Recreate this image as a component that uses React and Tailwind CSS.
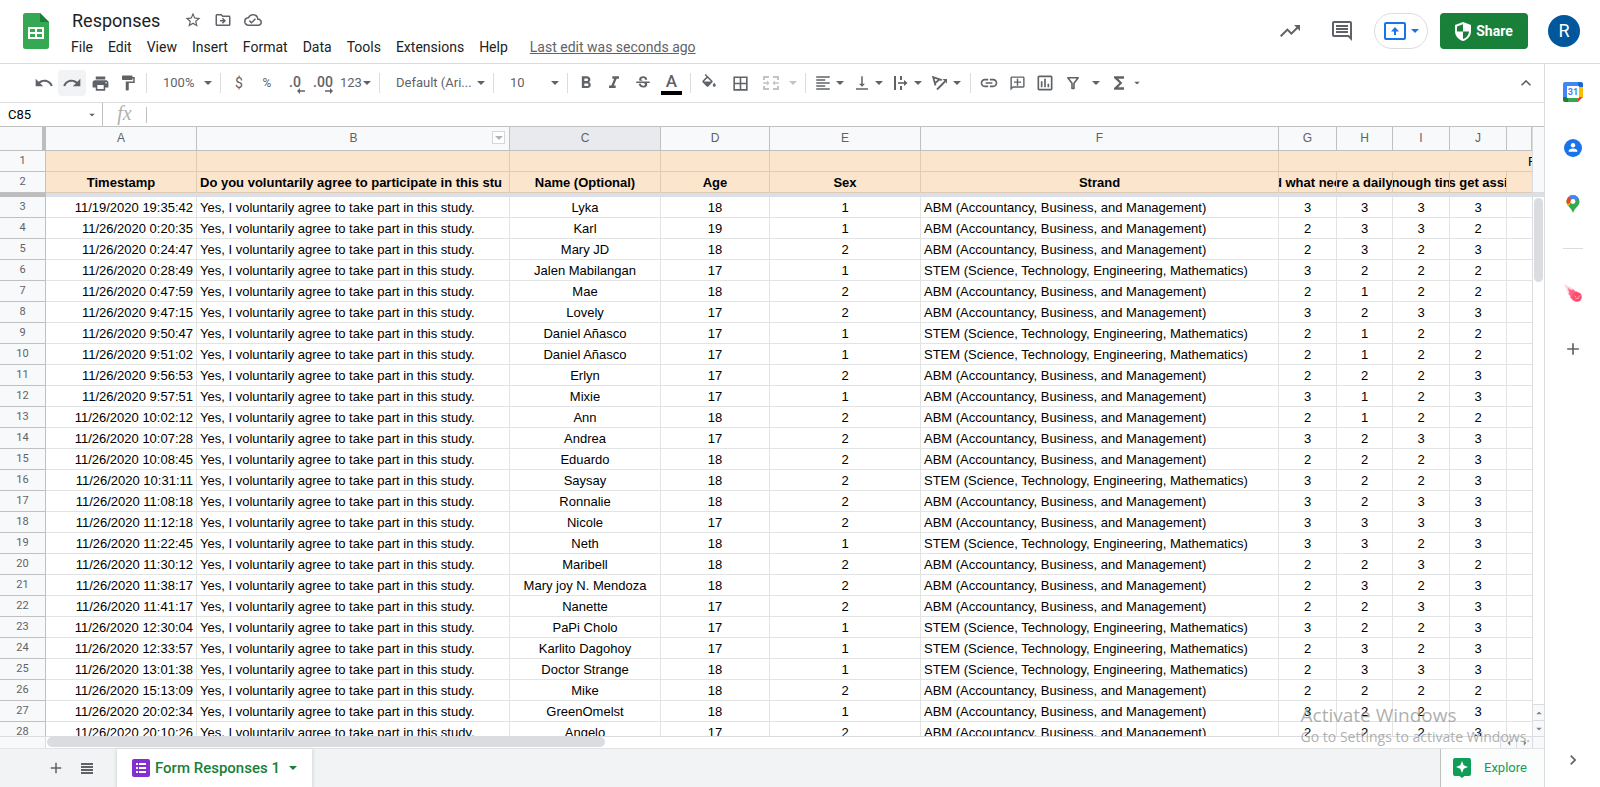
import {
  MdAdd,
  MdChevronRight,
  MdExpandLess,
  MdFormatAlignLeft,
  MdFormatBold,
  MdFormatItalic,
  MdFormatPaint,
  MdFunctions,
  MdLink,
  MdOutlineAddComment,
  MdOutlineAssessment,
  MdOutlineBorderAll,
  MdOutlineCloudDone,
  MdOutlineDriveFileMove,
  MdOutlineInsertComment,
  MdPrint,
  MdRedo,
  MdStarBorder,
  MdStrikethroughS,
  MdTrendingUp,
  MdUndo,
  MdVerticalAlignBottom,
} from "react-icons/md";

const MENUS = ["File", "Edit", "View", "Insert", "Format", "Data", "Tools", "Extensions", "Help"];

const CONSENT = "Yes, I voluntarily agree to take part in this study.";
const ABM = "ABM (Accountancy, Business, and Management)";
const STEM = "STEM (Science, Technology, Engineering, Mathematics)";

// timestamp, name, age, sex, strand, answers G-J
const ROWS = [
  ["11/19/2020 19:35:42", "Lyka", 18, 1, ABM, [3, 3, 3, 3]],
  ["11/26/2020 0:20:35", "Karl", 19, 1, ABM, [2, 3, 3, 2]],
  ["11/26/2020 0:24:47", "Mary JD", 18, 2, ABM, [2, 3, 2, 3]],
  ["11/26/2020 0:28:49", "Jalen Mabilangan", 17, 1, STEM, [3, 2, 2, 2]],
  ["11/26/2020 0:47:59", "Mae", 18, 2, ABM, [2, 1, 2, 2]],
  ["11/26/2020 9:47:15", "Lovely", 17, 2, ABM, [3, 2, 3, 3]],
  ["11/26/2020 9:50:47", "Daniel Añasco", 17, 1, STEM, [2, 1, 2, 2]],
  ["11/26/2020 9:51:02", "Daniel Añasco", 17, 1, STEM, [2, 1, 2, 2]],
  ["11/26/2020 9:56:53", "Erlyn", 17, 2, ABM, [2, 2, 2, 3]],
  ["11/26/2020 9:57:51", "Mixie", 17, 1, ABM, [3, 1, 2, 3]],
  ["11/26/2020 10:02:12", "Ann", 18, 2, ABM, [2, 1, 2, 2]],
  ["11/26/2020 10:07:28", "Andrea", 17, 2, ABM, [3, 2, 3, 3]],
  ["11/26/2020 10:08:45", "Eduardo", 18, 2, ABM, [2, 2, 2, 3]],
  ["11/26/2020 10:31:11", "Saysay", 18, 2, STEM, [3, 2, 2, 3]],
  ["11/26/2020 11:08:18", "Ronnalie", 18, 2, ABM, [3, 2, 3, 3]],
  ["11/26/2020 11:12:18", "Nicole", 17, 2, ABM, [3, 3, 3, 3]],
  ["11/26/2020 11:22:45", "Neth", 18, 1, STEM, [3, 3, 2, 3]],
  ["11/26/2020 11:30:12", "Maribell", 18, 2, ABM, [2, 2, 3, 2]],
  ["11/26/2020 11:38:17", "Mary joy N. Mendoza", 18, 2, ABM, [2, 3, 2, 3]],
  ["11/26/2020 11:41:17", "Nanette", 17, 2, ABM, [2, 2, 3, 3]],
  ["11/26/2020 12:30:04", "PaPi Cholo", 17, 1, STEM, [3, 2, 2, 3]],
  ["11/26/2020 12:33:57", "Karlito Dagohoy", 17, 1, STEM, [2, 3, 2, 3]],
  ["11/26/2020 13:01:38", "Doctor Strange", 18, 1, STEM, [2, 3, 3, 3]],
  ["11/26/2020 15:13:09", "Mike", 18, 2, ABM, [2, 2, 2, 2]],
  ["11/26/2020 20:02:34", "GreenOmelst", 18, 1, ABM, [3, 2, 2, 3]],
  ["11/26/2020 20:10:26", "Angelo", 17, 2, ABM, [2, 2, 2, 3]],
];

const QUESTIONS = ["d what nee", "re a daily", "nough tin", "s get assi"];

function Caret({ className = "" }) {
  return (
    <svg viewBox="0 0 8 4" className={`h-1 w-2 shrink-0 ${className}`} fill="currentColor">
      <path d="M0 0h8L4 4z" />
    </svg>
  );
}

function SheetsLogo() {
  return (
    <svg viewBox="0 0 26 36" className="h-9 w-[26px] shrink-0">
      <path d="M17 0H2.5A2.5 2.5 0 0 0 0 2.5v31A2.5 2.5 0 0 0 2.5 36h21a2.5 2.5 0 0 0 2.5-2.5V9z" fill="#34a853" />
      <path d="M17 0l9 9h-9z" fill="#188038" />
      <path d="M5 14h16v12H5zM7 16v3h5v-3zm7 0v3h5v-3zm-7 5v3h5v-3zm7 0v3h5v-3z" fill="#fff" fillRule="evenodd" />
    </svg>
  );
}

function DecimalIcon({ more }) {
  return (
    <span className="flex flex-col items-center pt-1 text-sm leading-3 font-medium">
      {more ? ".00" : ".0"}
      <svg
        viewBox="0 0 8 6"
        className={more ? "ml-3 h-[6px] w-2" : "ml-3 h-[6px] w-2 rotate-180"}
        fill="currentColor"
      >
        <path d="M0 2.2h5V0l3 3-3 3V3.8H0z" />
      </svg>
    </span>
  );
}

function FillIcon() {
  return (
    <svg viewBox="0 0 24 24" className="size-[18px]" fill="currentColor">
      <path d="M16.560 8.940 7.620 0 6.210 1.410l2.380 2.380-5.150 5.150a1.490 1.490 0 0 0 0 2.120l5.500 5.500c.29.29.68.44 1.060.44s.77-.15 1.060-.44l5.500-5.500c.59-.58.59-1.530 0-2.120zM5.210 10 10 5.210 14.790 10zM19 11.500s-2 2.170-2 3.500c0 1.100.9 2 2 2s2-.9 2-2c0-1.330-2-3.500-2-3.500z" />
    </svg>
  );
}

function FunnelIcon() {
  return (
    <svg viewBox="0 0 14 14" className="size-[14px]" fill="none" stroke="currentColor" strokeWidth="1.6">
      <path d="M1.800 1.800h10.400L8 7.200v5.300H6V7.200z" strokeLinejoin="round" />
    </svg>
  );
}

function MergeIcon() {
  return (
    <svg viewBox="0 0 16 14" className="h-[14px] w-4" fill="none" stroke="currentColor" strokeWidth="2">
      <path d="M1 4V1h5M10 1h5v3M1 10v3h5M10 13h5v-3" />
      <path d="M0 7h5M16 7h-5" strokeWidth="1.5" />
      <path d="M4 4.5 6.6 7 4 9.5zM12 4.5 9.4 7l2.6 2.5z" fill="currentColor" stroke="none" />
    </svg>
  );
}

function OverflowIcon() {
  return (
    <svg viewBox="0 0 16 16" className="size-4" fill="none" stroke="currentColor" strokeWidth="2">
      <path d="M2 1v14M8 1v4M8 11v4" />
      <path d="M5 8h8" strokeWidth="1.6" />
      <path d="M11 5l3.6 3L11 11z" fill="currentColor" stroke="none" />
    </svg>
  );
}

function RotateTextIcon() {
  return (
    <svg viewBox="0 0 18 16" className="h-4 w-[18px]" fill="none" stroke="currentColor" strokeWidth="1.8">
      <path d="M4.500 10.500 2.200 2.200l8.600 3M8.400 4.600l-4.600 3.700" />
      <path d="M6 14.500 14 6.500" />
      <path d="M11.500 4H16v4.500z" fill="currentColor" stroke="none" />
    </svg>
  );
}

function PresentIcon() {
  return (
    <svg viewBox="0 0 22 18" className="h-[18px] w-[22px]" fill="none" stroke="currentColor" strokeWidth="2">
      <rect x="1" y="1" width="20" height="16" rx="1" />
      <path d="M11 13V8" />
      <path d="M7 9.5 11 5l4 4.5z" fill="currentColor" stroke="none" />
    </svg>
  );
}

function ShieldIcon() {
  return (
    <svg viewBox="0 0 16 19" className="h-[19px] w-4">
      <path d="M8 0 0 3v6c0 4.700 3.200 8.800 8 10 4.800-1.200 8-5.300 8-10V3z" fill="#fff" />
      <path d="M8 2.200v7.300H2V4.400zM8 9.500h6c-.3 3.700-2.600 6.500-6 7.400z" fill="#188038" />
    </svg>
  );
}

function CalendarIcon() {
  return (
    <svg viewBox="0 0 20 20" className="size-5">
      <path d="M2 0h13v5H5v10H0V2a2 2 0 0 1 2-2z" fill="#4285f4" />
      <path d="M15 0h3a2 2 0 0 1 2 2v3h-5z" fill="#1967d2" />
      <path d="M15 5h5v10h-5z" fill="#fbbc04" />
      <path d="M5 15h10v5H5z" fill="#34a853" />
      <path d="M0 15h5v5H2a2 2 0 0 1-2-2z" fill="#188038" />
      <path d="M15 15h5l-5 5z" fill="#ea4335" />
      <path d="M4 4h12v12H4z" fill="#fff" />
      <text x="10" y="13" textAnchor="middle" fontSize="9" fontWeight="700" fill="#4285f4">
        31
      </text>
    </svg>
  );
}

function ContactsIcon() {
  return (
    <svg viewBox="0 0 18 18" className="size-[18px]">
      <circle cx="9" cy="9" r="9" fill="#1a73e8" />
      <circle cx="9" cy="6.300" r="2.200" fill="#fff" />
      <path d="M4.500 12.800c0-2.300 2-3.300 4.500-3.300s4.500 1 4.500 3.300z" fill="#fff" />
    </svg>
  );
}

function MapsIcon() {
  return (
    <svg viewBox="0 0 14 18" className="h-[18px] w-[14px]">
      <clipPath id="pin">
        <path d="M7 0a6.500 6.500 0 0 0-6.500 6.500c0 2 .8 3.300 2 4.800C4.500 13.600 6 15 7 18c1-3 2.500-4.400 4.500-6.700 1.200-1.500 2-2.800 2-4.800A6.500 6.500 0 0 0 7 0z" />
      </clipPath>
      <g clipPath="url(#pin)">
        <path d="M0 0h14v18H0z" fill="#34a853" />
        <path d="M0 13.500 12 0H0z" fill="#fbbc04" />
        <path d="M3 0h10v4L9 5 7 7 2.500 2.500z" fill="#4285f4" />
        <path d="M0 1.500h2.500L6 5 2.500 9 0 8z" fill="#ea4335" />
      </g>
      <circle cx="7" cy="6.500" r="2.400" fill="#fff" />
    </svg>
  );
}

function CometIcon() {
  return (
    <svg viewBox="0 0 20 20" className="size-5">
      <path d="M1 1l8 4 5 4-6 6-3-5z" fill="#ffd3dc" />
      <path d="M5 5l4 2.500L9.500 6l3 2.500h1.500l3 3-7 6-3-3.500.5-1-2.500-2.500 1.500.2z" fill="#ff6484" />
      <circle cx="14" cy="14" r="4.800" fill="#ff4a6e" />
      <path d="M11.500 13l1.500 1M17 12.500l-1.500 1.500M12.500 16c1-1 2.500-1 3.500-.5" stroke="#ffd0da" strokeWidth=".8" fill="none" />
    </svg>
  );
}

function ExploreIcon() {
  return (
    <svg viewBox="0 0 18 20" className="h-5 w-[18px]">
      <path d="M2 0h14a2 2 0 0 1 2 2v14a2 2 0 0 1-2 2h-4.500L9 20l-2.500-2H2a2 2 0 0 1-2-2V2a2 2 0 0 1 2-2z" fill="#0f9d58" />
      <path d="M9 3l1.700 4.300L15 9l-4.300 1.700L9 15l-1.700-4.300L3 9l4.300-1.700z" fill="#fff" />
    </svg>
  );
}

function FormIcon() {
  return (
    <svg viewBox="0 0 18 18" className="size-[18px] shrink-0">
      <rect width="18" height="18" rx="2" fill="#8430ce" />
      <path d="M4 4h2v2H4zM7 4h7v2H7zM4 8h2v2H4zM7 8h7v2H7zM4 12h2v2H4zM7 12h7v2H7z" fill="#fff" />
    </svg>
  );
}

function Separator() {
  return <div className="mx-1 h-5 w-px shrink-0 bg-[#dadce0]" />;
}

function ToolButton({ label, className = "w-7", children }) {
  return (
    <button
      type="button"
      aria-label={label}
      className={`flex h-[26px] shrink-0 items-center justify-center rounded-sm ${className}`}
    >
      {children}
    </button>
  );
}

function ToolMenu({ label, children }) {
  return (
    <button type="button" aria-label={label} className="flex h-[26px] w-[39px] shrink-0 items-center gap-1 pl-1">
      <span className="flex w-[18px] justify-center">{children}</span>
      <Caret />
    </button>
  );
}

function ToolSelect({ label, value, className }) {
  return (
    <div className={`relative flex h-[26px] shrink-0 items-center ${className}`}>
      <select aria-label={label} className="h-full w-full appearance-none bg-transparent pl-3 text-[13px] outline-none">
        <option>{value}</option>
      </select>
      <Caret className="pointer-events-none absolute right-1" />
    </div>
  );
}

function Header() {
  return (
    <header className="flex h-16 shrink-0 items-center border-b border-[#dadce0] pr-5 pb-px pl-[23px]">
      <SheetsLogo />
      <div className="ml-[15px] flex flex-col">
        <div className="flex h-8 items-center px-2 text-[#5f6368]">
          <h1 className="pt-0.5 text-lg text-[#202124]">Responses</h1>
          <div className="ml-6 flex gap-3">
            <button type="button" aria-label="Star"><MdStarBorder className="size-[18px]" /></button>
            <button type="button" aria-label="Move"><MdOutlineDriveFileMove className="size-[18px]" /></button>
            <button type="button" aria-label="See document status"><MdOutlineCloudDone className="size-[18px]" /></button>
          </div>
        </div>
        <nav className="flex h-[22px] items-center gap-px text-sm text-[#202124]">
          {MENUS.map((menu) => (
            <button key={menu} type="button" className="px-[7px]">
              {menu}
            </button>
          ))}
          <a href="#history" className="ml-[14px] text-[#5f6368] underline">
            Last edit was seconds ago
          </a>
        </nav>
      </div>
      <div className="ml-auto flex items-center gap-3 text-[#5f6368]">
        <button type="button" aria-label="Activity" className="flex size-10 items-center justify-center">
          <MdTrendingUp className="size-6" />
        </button>
        <button type="button" aria-label="Comments" className="flex size-10 items-center justify-center">
          <MdOutlineInsertComment className="size-6" />
        </button>
        <button
          type="button"
          aria-label="Present"
          className="flex h-9 w-[54px] items-center justify-center gap-[5px] rounded-full border border-[#dadce0] text-[#1a73e8]"
        >
          <PresentIcon />
          <Caret />
        </button>
        <button
          type="button"
          className="flex h-9 w-[88px] items-center justify-center gap-[5px] rounded bg-[#188038] text-sm font-bold text-white"
        >
          <ShieldIcon />
          Share
        </button>
        <button
          type="button"
          aria-label="Account"
          className="ml-2 flex size-8 items-center justify-center rounded-full bg-[#01579b] text-lg text-white"
        >
          R
        </button>
      </div>
    </header>
  );
}

function Toolbar() {
  return (
    <div className="flex h-[39px] shrink-0 items-center border-b border-[#dadce0] pr-[6px] pl-[30px] text-[#5f6368]">
      <ToolButton label="Undo"><MdUndo className="size-5" /></ToolButton>
      <ToolButton label="Redo" className="w-7 bg-[#f1f3f4]"><MdRedo className="size-5" /></ToolButton>
      <ToolButton label="Print"><MdPrint className="size-[19px]" /></ToolButton>
      <ToolButton label="Paint format"><MdFormatPaint className="size-[18px]" /></ToolButton>
      <Separator />
      <ToolSelect label="Zoom" value="100%" className="w-[65px]" />
      <Separator />
      <ToolButton label="Format as currency"><span className="text-sm">$</span></ToolButton>
      <ToolButton label="Format as percent"><span className="text-xs">%</span></ToolButton>
      <ToolButton label="Decrease decimal places"><DecimalIcon /></ToolButton>
      <ToolButton label="Increase decimal places"><DecimalIcon more /></ToolButton>
      <button type="button" className="flex h-[26px] w-[38px] items-center gap-[1px] pl-[3px] text-[13px]">
        123
        <Caret />
      </button>
      <Separator />
      <ToolSelect label="Font" value="Default (Ari..." className="w-[105px]" />
      <Separator />
      <ToolSelect label="Font size" value="10" className="w-[65px]" />
      <Separator />
      <ToolButton label="Bold"><MdFormatBold className="size-5" /></ToolButton>
      <ToolButton label="Italic"><MdFormatItalic className="size-5" /></ToolButton>
      <ToolButton label="Strikethrough" className="w-[29px]"><MdStrikethroughS className="size-[18px]" /></ToolButton>
      <ToolButton label="Text color" className="w-[29px]">
        <span className="flex w-[21px] flex-col items-center text-[17px] leading-5 font-medium">
          A
          <span className="h-1 w-full bg-black" />
        </span>
      </ToolButton>
      <Separator />
      <ToolButton label="Fill color"><FillIcon /></ToolButton>
      <ToolButton label="Borders" className="w-[34px]"><MdOutlineBorderAll className="size-[19px]" /></ToolButton>
      <ToolButton label="Merge cells" className="w-7 text-[#c1c3c6]"><MergeIcon /></ToolButton>
      <ToolButton label="Merge type" className="w-4 text-[#c1c3c6]"><Caret /></ToolButton>
      <Separator />
      <ToolMenu label="Horizontal align"><MdFormatAlignLeft className="size-[18px]" /></ToolMenu>
      <ToolMenu label="Vertical align"><MdVerticalAlignBottom className="size-[18px]" /></ToolMenu>
      <ToolMenu label="Text wrapping"><OverflowIcon /></ToolMenu>
      <ToolMenu label="Text rotation"><RotateTextIcon /></ToolMenu>
      <Separator />
      <ToolButton label="Insert link"><MdLink className="size-5" /></ToolButton>
      <ToolButton label="Insert comment"><MdOutlineAddComment className="size-[17px] -scale-x-100" /></ToolButton>
      <ToolButton label="Insert chart"><MdOutlineAssessment className="size-5" /></ToolButton>
      <ToolButton label="Create a filter"><FunnelIcon /></ToolButton>
      <ToolButton label="Filter views" className="w-[18px]"><Caret /></ToolButton>
      <ToolButton label="Functions" className="w-[27px]"><MdFunctions className="size-5" /></ToolButton>
      <ToolButton label="More functions" className="w-[10px]"><Caret className="scale-75" /></ToolButton>
      <ToolButton label="Hide the menus" className="ml-auto w-6"><MdExpandLess className="size-5" /></ToolButton>
    </div>
  );
}

function FormulaBar() {
  return (
    <div className="flex h-[24px] shrink-0 items-center border-b border-[#c0c0c0]">
      <div className="flex h-full w-[103px] items-center border-r border-[#c0c0c0] pr-[6px] pl-2 text-[#5f6368]">
        <input aria-label="Name box" defaultValue="C85" className="w-full min-w-0 text-[13px] text-black outline-none" />
        <Caret className="scale-75" />
      </div>
      <label
        htmlFor="formula"
        className="w-[43px] pb-1 text-center font-['Liberation_Serif',serif] text-xl leading-none text-[#b0b0b0] italic"
      >
        fx
      </label>
      <input id="formula" className="h-4 min-w-0 flex-1 border-l border-[#c0c0c0] px-2 text-[13px] outline-none" />
    </div>
  );
}

function HeadCell({ children, active }) {
  return (
    <th
      scope="col"
      className={`h-6 overflow-hidden border-r border-b border-[#c0c0c0] pb-0.5 text-xs font-normal text-[#5f6368] ${
        active ? "bg-[#e8eaed]" : "bg-[#f8f9fa]"
      }`}
    >
      {children}
    </th>
  );
}

function RowNumber({ n }) {
  return (
    <th
      scope="row"
      className="border-r border-b border-[#c0c0c0] bg-[#f8f9fa] pb-px font-['Roboto',sans-serif] text-[11px] leading-[19px] font-normal text-[#5f6368]"
    >
      {n}
    </th>
  );
}

function Cell({ children, align = "text-center" }) {
  return (
    <td className={`h-[21px] overflow-hidden border-r border-b border-[#e2e3e3] px-[3px] pt-0.5 leading-[18px] whitespace-nowrap ${align}`}>
      {children}
    </td>
  );
}

function FrozenCell({ children, start }) {
  return (
    <td className="h-[21px] overflow-hidden border-r border-b border-[#e0cbb5] bg-[#fce5cd] pt-0.5 leading-[18px] font-bold whitespace-nowrap">
      <div className={`flex overflow-hidden ${start ? "pl-[3px]" : "justify-center"}`}>
        <span className="shrink-0">{children}</span>
      </div>
    </td>
  );
}

function Grid() {
  return (
    <table className="w-full table-fixed border-separate border-spacing-0 font-['Liberation_Sans',Arial,sans-serif] text-[13px] text-black">
      <colgroup>
        <col className="w-[46px]" />
        <col className="w-[151px]" />
        <col className="w-[313px]" />
        <col className="w-[151px]" />
        <col className="w-[109px]" />
        <col className="w-[151px]" />
        <col className="w-[358px]" />
        <col className="w-[58px]" />
        <col className="w-[56px]" />
        <col className="w-[57px]" />
        <col className="w-[57px]" />
        <col />
      </colgroup>
      <thead>
        <tr>
          <td className="h-6 border-r-4 border-b border-r-[#bdbdbd] border-b-[#c0c0c0] bg-[#f8f9fa]" />
          <HeadCell>A</HeadCell>
          <HeadCell>
            <div className="flex items-center pr-1 pl-[18px]">
              <span className="flex-1">B</span>
              <button
                type="button"
                aria-label="Column B menu"
                className="flex size-[13px] items-center justify-center border border-[#d5d7da] bg-white text-[#b0b3b8]"
              >
                <Caret />
              </button>
            </div>
          </HeadCell>
          <HeadCell active>C</HeadCell>
          {["D", "E", "F", "G", "H", "I", "J", ""].map((col) => (
            <HeadCell key={col}>{col}</HeadCell>
          ))}
        </tr>
        <tr>
          <RowNumber n={1} />
          {["a", "b", "c", "d", "e", "f"].map((col) => (
            <FrozenCell key={col}>&nbsp;</FrozenCell>
          ))}
          <td colSpan={5} className="h-[21px] overflow-hidden border-b border-[#e0cbb5] bg-[#fce5cd] pt-0.5 leading-[18px]">
            <div className="ml-auto w-1 overflow-hidden">R</div>
          </td>
        </tr>
        <tr>
          <RowNumber n={2} />
          <FrozenCell>Timestamp</FrozenCell>
          <FrozenCell start>Do you voluntarily agree to participate in this stu</FrozenCell>
          <FrozenCell>Name (Optional)</FrozenCell>
          <FrozenCell>Age</FrozenCell>
          <FrozenCell>Sex</FrozenCell>
          <FrozenCell>Strand</FrozenCell>
          {QUESTIONS.map((question) => (
            <FrozenCell key={question}>{question}</FrozenCell>
          ))}
          <td className="border-b border-[#e0cbb5] bg-[#fce5cd]" />
        </tr>
        <tr>
          <td className="h-1 bg-[#bdbdbd]" />
          <td colSpan={11} className="h-1 bg-[#dadfe8]" />
        </tr>
      </thead>
      <tbody>
        {ROWS.map(([time, name, age, sex, strand, answers], i) => (
          <tr key={time}>
            <RowNumber n={i + 3} />
            <Cell align="text-right">{time}</Cell>
            <Cell align="text-left">{CONSENT}</Cell>
            <Cell>{name}</Cell>
            <Cell>{age}</Cell>
            <Cell>{sex}</Cell>
            <Cell align="text-left">{strand}</Cell>
            {answers.map((answer, k) => (
              <Cell key={k}>{answer}</Cell>
            ))}
            <td className="border-b border-[#e2e3e3]" />
          </tr>
        ))}
      </tbody>
    </table>
  );
}

function VerticalScroll() {
  return (
    <div className="flex w-3 shrink-0 flex-col border-l border-[#dadce0] text-[#80868b]">
      <div className="h-[66px] shrink-0 border-b border-[#dadce0] bg-[#f8f9fa]" />
      <div className="h-1 shrink-0 bg-[#dadfe8]" />
      <div className="mx-px mt-px h-[84px] shrink-0 rounded-full bg-[#dadce0]" />
      <button type="button" aria-label="Scroll up" className="mt-auto flex h-4 items-center justify-center border-t border-[#dadce0] bg-[#f8f9fa]">
        <Caret className="rotate-180 scale-75" />
      </button>
      <button type="button" aria-label="Scroll down" className="flex h-4 items-center justify-center border-t border-[#dadce0] bg-[#f8f9fa]">
        <Caret className="scale-75" />
      </button>
    </div>
  );
}

function HorizontalScroll() {
  return (
    <div className="flex h-3 shrink-0 border-t border-[#dadce0] text-[#80868b]">
      <div className="w-[46px] border-r border-[#dadce0] bg-[#f8f9fa]" />
      <div className="ml-px h-[10px] w-[558px] rounded-full bg-[#dadce0]" />
      <button type="button" aria-label="Scroll left" className="ml-auto flex w-4 items-center justify-center border-l border-[#dadce0] bg-[#f8f9fa]">
        <Caret className="rotate-90 scale-75" />
      </button>
      <button type="button" aria-label="Scroll right" className="flex w-4 items-center justify-center border-l border-[#dadce0] bg-[#f8f9fa]">
        <Caret className="-rotate-90 scale-75" />
      </button>
      <div className="w-3 border-l border-[#dadce0] bg-[#f8f9fa]" />
    </div>
  );
}

function SheetTabs() {
  return (
    <footer className="flex h-[39px] shrink-0 border-t border-[#e2e3e3] bg-[#f1f3f4] text-[#5f6368]">
      <div className="flex w-[117px] items-center gap-4 pl-[47px]">
        <button type="button" aria-label="Add sheet"><MdAdd className="size-[18px]" /></button>
        <button type="button" aria-label="All sheets">
          <svg viewBox="0 0 12 11" className="h-[11px] w-3" fill="currentColor">
            <path d="M0 0h12v2H0zM0 3h12v2H0zM0 6h12v2H0zM0 9h12v2H0z" />
          </svg>
        </button>
      </div>
      <button
        type="button"
        className="flex items-center gap-[5px] bg-white px-[15px] text-[15px] font-medium text-[#188038] shadow-[0_1px_3px_1px_rgba(60,64,67,0.15)]"
      >
        <FormIcon />
        Form Responses 1
        <Caret className="ml-1" />
      </button>
      <button
        type="button"
        className="ml-auto flex w-[104px] items-center gap-[13px] border-l border-[#c0c0c0] bg-[#fbfdfc] pl-3 text-[13px] text-[#0f9d58]"
      >
        <ExploreIcon />
        Explore
      </button>
    </footer>
  );
}

function SidePanel() {
  const button = "flex h-14 w-full items-center justify-center";
  return (
    <aside className="flex w-14 shrink-0 flex-col items-center border-l border-[#dadce0] text-[#5f6368]">
      <button type="button" aria-label="Calendar" className={button}><CalendarIcon /></button>
      <button type="button" aria-label="Contacts" className={button}><ContactsIcon /></button>
      <button type="button" aria-label="Maps" className={button}><MapsIcon /></button>
      <div className="my-4 h-px w-5 bg-[#dadce0]" />
      <button type="button" aria-label="Comet add-on" className={button}><CometIcon /></button>
      <button type="button" aria-label="Get add-ons" className={button}><MdAdd className="size-5" /></button>
      <button type="button" aria-label="Hide side panel" className="mt-auto flex h-[54px] items-center">
        <MdChevronRight className="size-5" />
      </button>
    </aside>
  );
}

export default function App() {
  return (
    <div className="relative flex h-screen flex-col overflow-hidden bg-white font-['Roboto',sans-serif]">
      <Header />
      <div className="flex min-h-0 flex-1">
        <main className="flex min-w-0 flex-1 flex-col">
          <Toolbar />
          <FormulaBar />
          <div className="flex min-h-0 flex-1">
            <div className="min-w-0 flex-1 overflow-hidden">
              <Grid />
            </div>
            <VerticalScroll />
          </div>
          <HorizontalScroll />
          <SheetTabs />
        </main>
        <SidePanel />
      </div>
      <div className="pointer-events-none absolute right-[70px] bottom-10 font-['Open_Sans',sans-serif] text-[#8c8c8c]/70">
        <p className="text-[19px] leading-6">Activate Windows</p>
        <p className="text-sm leading-5">Go to Settings to activate Windows.</p>
      </div>
    </div>
  );
}
